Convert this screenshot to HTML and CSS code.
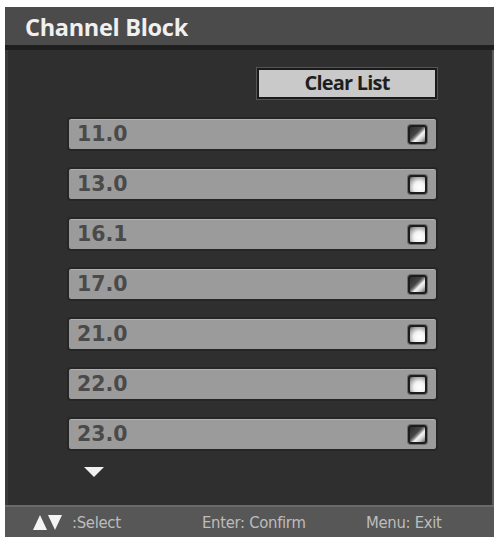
FILE: index.html
```html
<!DOCTYPE html>
<html>
<head>
<meta charset="utf-8">
<link rel="stylesheet" href="styles.css">
</head>
<body>
<div class="panel">
  <div class="titlebar">Channel Block</div>
  <div class="content">
    <div class="btn-row"><div class="clear-btn">Clear List</div></div>
    <div class="list">
      <div class="row"><span class="ch">11.0</span><span class="box checked"></span></div>
      <div class="row"><span class="ch">13.0</span><span class="box"></span></div>
      <div class="row"><span class="ch">16.1</span><span class="box"></span></div>
      <div class="row"><span class="ch">17.0</span><span class="box checked"></span></div>
      <div class="row"><span class="ch">21.0</span><span class="box"></span></div>
      <div class="row"><span class="ch">22.0</span><span class="box"></span></div>
      <div class="row"><span class="ch">23.0</span><span class="box checked"></span></div>
    </div>
    <div class="more"></div>
  </div>
  <div class="footer">
    <span class="hint sel"><span class="arrows"><span class="tri up"></span><span class="tri down"></span></span>:Select</span>
    <span class="hint enter">Enter: Confirm</span>
    <span class="hint">Menu: Exit</span>
  </div>
</div>
</body>
</html>
```
FILE: styles.css
```css
html, body {
  margin: 0;
  padding: 0;
  background: #ffffff;
}
.panel {
  margin: 7px 0 0 5px;
  width: 489px;
  height: 530px;
  display: flex;
  flex-direction: column;
  background: #2f2f2f;
  box-shadow: inset 2px 0 0 #5a5a5a, inset -2px 0 0 #5a5a5a;
}
.titlebar {
  height: 43px;
  box-sizing: border-box;
  background: #4b4b4b;
  border-bottom: 5px solid #1f1f1f;
  color: #f0f0f0;
  font-family: "Open Sans", "DejaVu Sans", sans-serif;
  font-weight: 700;
  font-size: 23.5px;
  line-height: 38px;
  padding: 1px 0 0 20px;
  letter-spacing: -0.3px;
}
.content {
  flex: 1;
  display: flex;
  flex-direction: column;
  padding: 18px 0 0 62px;
  border-left: 3px solid #3a3a3a;
}
.btn-row {
  display: flex;
  padding-left: 187px;
}
.clear-btn {
  width: 180px;
  height: 31px;
  box-sizing: border-box;
  background: #c9c9c9;
  border: 2px solid #1a1a1a;
  outline: 1px solid #555;
  color: #1e1e1e;
  font-family: "Open Sans", "DejaVu Sans", sans-serif;
  font-weight: 700;
  font-size: 20px;
  line-height: 26px;
  text-align: center;
  letter-spacing: -0.8px;
}
.list {
  display: flex;
  flex-direction: column;
  gap: 16px;
  margin-top: 18px;
  margin-left: -3px;
}
.row {
  width: 371px;
  height: 34px;
  box-sizing: border-box;
  background: #9b9b9b;
  border: 2px solid #262626;
  border-radius: 4px;
  box-shadow: inset 0 1px 0 #b0b0b0;
  display: flex;
  align-items: center;
  justify-content: space-between;
  padding: 0 9px 0 8px;
}
.ch {
  font-family: "DejaVu Sans", Verdana, sans-serif;
  font-weight: 700;
  font-size: 20.5px;
  color: #4a4a4a;
}
.box {
  width: 19px;
  height: 19px;
  box-sizing: border-box;
  border: 2px solid #1c1c1c;
  border-radius: 3px;
  background: radial-gradient(circle at 62% 68%, #ffffff 0%, #f2f2f2 40%, #9a9a9a 80%, #444 100%);
  box-shadow: 0 0 0 1px #6a6a6a;
}
.box.checked {
  background: linear-gradient(135deg, #2c2c2c 0%, #454545 40%, #808080 50%, #f5f5f5 62%, #d0d0d0 78%, #666 100%);
}
.more {
  margin: 16px 0 0 14px;
  width: 0;
  height: 0;
  border-left: 10px solid transparent;
  border-right: 10px solid transparent;
  border-top: 10px solid #f0f0f0;
}
.footer {
  height: 32px;
  background: #575757;
  border-top: 2px solid #6a6a6a;
  box-sizing: border-box;
  display: flex;
  align-items: center;
  font-family: "DejaVu Sans Condensed", "Liberation Sans Narrow", sans-serif;
  font-size: 16.5px;
  color: #bdbdbd;
  letter-spacing: -0.3px;
}
.hint.sel {
  display: flex;
  align-items: center;
  margin-left: 28px;
  width: 169px;
}
.arrows {
  display: flex;
  gap: 1px;
  margin-right: 10px;
}
.tri {
  width: 0;
  height: 0;
  border-left: 7px solid transparent;
  border-right: 7px solid transparent;
}
.tri.up { border-bottom: 15px solid #f4f4f4; }
.tri.down { border-top: 15px solid #f4f4f4; }
.hint.enter { width: 164px; }
```
